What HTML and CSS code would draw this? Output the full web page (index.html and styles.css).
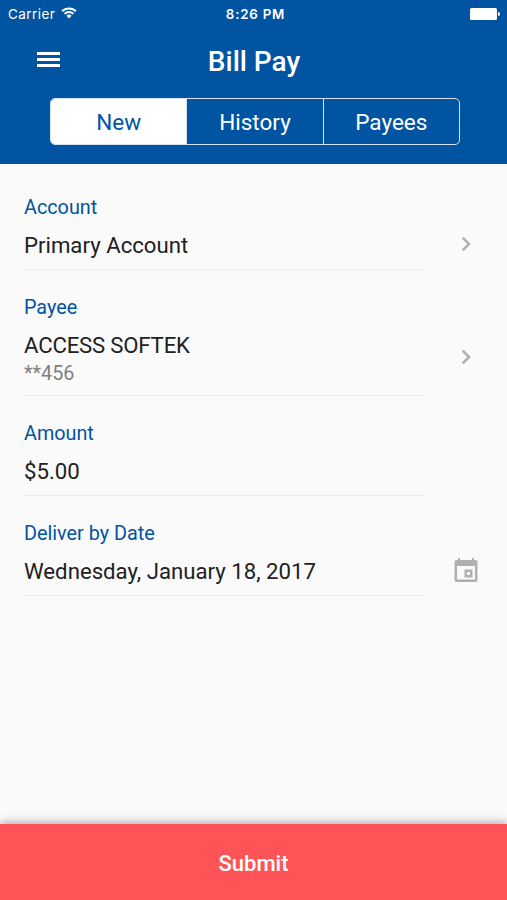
FILE: index.html
```html
<!DOCTYPE html>
<html lang="en">
<head>
  <meta charset="utf-8">
  <meta name="viewport" content="width=device-width, initial-scale=1.0">
  <title>Bill Pay</title>
  <link rel="stylesheet" href="styles.css">
</head>
<body>
  <header class="header">
    <div class="status-bar">
      <div class="carrier">
        <span>Carrier</span>
        <svg class="wifi" viewBox="0 0 16 12">
          <path d="M1 4.300a10 10 0 0 1 14 0M3.500 6.900a6.400 6.400 0 0 1 9 0" />
          <path class="dot" d="M8 11.400 5.400 8.800a3.700 3.700 0 0 1 5.200 0z" />
        </svg>
      </div>
      <div class="time">8:26 PM</div>
      <svg class="battery" viewBox="0 0 30 12">
        <rect width="27" height="12" rx="1.5" />
        <path d="M28 4a2 2 0 0 1 0 4z" />
      </svg>
    </div>

    <div class="title-bar">
      <button class="menu-btn" aria-label="Menu">
        <span></span>
        <span></span>
        <span></span>
      </button>
      <h1>Bill Pay</h1>
    </div>

    <nav class="tabs">
      <button class="tab active">New</button>
      <button class="tab">History</button>
      <button class="tab">Payees</button>
    </nav>
  </header>

  <main class="form">
    <div class="row">
      <div class="field">
        <div class="label">Account</div>
        <div class="value">Primary Account</div>
      </div>
      <svg class="chevron" viewBox="0 0 10 16">
        <path d="M1.700 1.700 8 8l-6.300 6.300" />
      </svg>
    </div>

    <div class="row">
      <div class="field">
        <div class="label">Payee</div>
        <div class="value payee">ACCESS SOFTEK</div>
        <div class="note">**456</div>
      </div>
      <svg class="chevron tall" viewBox="0 0 10 16">
        <path d="M1.700 1.700 8 8l-6.300 6.300" />
      </svg>
    </div>

    <div class="row">
      <div class="field">
        <div class="label">Amount</div>
        <div class="value">$5.00</div>
      </div>
    </div>

    <div class="row">
      <div class="field">
        <div class="label">Deliver by Date</div>
        <div class="value">Wednesday, January 18, 2017</div>
      </div>
      <svg class="calendar" viewBox="0 0 24 26">
        <path fill-rule="evenodd" d="M4 1h2v2h12V1h2v2h1.500a2 2 0 0 1 2 2v18a2 2 0 0 1-2 2h-19a2 2 0 0 1-2-2V5a2 2 0 0 1 2-2H4zM3 9v13.500h18V9z" />
        <path fill-rule="evenodd" d="M10.500 12.500h8v8h-8zM13 15v3h3v-3z" />
      </svg>
    </div>
  </main>

  <button class="submit-btn">Submit</button>
</body>
</html>
```

FILE: styles.css
```css
:root {
  --primary-color: #0054a2;
  --submit-color: #ff5457;
  --background: #fafafa;
  --text-color: #212121;
  --icon-color: #b0b0b0;
}

* {
  margin: 0;
  padding: 0;
  box-sizing: border-box;
}

body {
  display: flex;
  flex-direction: column;
  height: 100vh;
  background: var(--background);
  color: var(--text-color);
  font-family: Roboto, sans-serif;
}

button {
  border: none;
  background: none;
  color: inherit;
  font-family: inherit;
  cursor: pointer;
}

.header {
  height: 164px;
  background: var(--primary-color);
  color: white;
}

.status-bar {
  display: grid;
  grid-template-columns: 1fr auto 1fr;
  align-items: center;
  height: 27px;
  padding: 0 4px 0 8px;
  font-family: Inter, sans-serif;
  font-size: 13.5px;
}

.carrier {
  display: flex;
  align-items: center;
  gap: 6px;
  letter-spacing: 0.45px;
}

.wifi {
  width: 16px;
  height: 12px;
  margin-top: -2px;
  fill: none;
  stroke: white;
  stroke-width: 1.9;
}

.wifi .dot {
  fill: white;
  stroke: none;
}

.time {
  font-weight: 600;
  font-size: 13.3px;
  letter-spacing: 0.8px;
}

.battery {
  justify-self: end;
  width: 30px;
  height: 12px;
  margin-right: 3px;
  fill: white;
}

.title-bar {
  display: grid;
  grid-template-columns: 1fr auto 1fr;
  align-items: center;
  height: 71px;
  padding: 0 36px 0 37px;
}

.menu-btn {
  display: flex;
  flex-direction: column;
  gap: 3px;
  width: 23px;
  margin-bottom: 6px;
}

.menu-btn span {
  width: 100%;
  height: 3px;
  background: white;
}

h1 {
  font-size: 28px;
  font-weight: 500;
  line-height: 32px;
  margin-bottom: 1px;
}

.tabs {
  display: flex;
  width: 410px;
  height: 47px;
  margin-left: 50px;
  border: 1px solid #d5e5f4;
  border-radius: 5px;
  overflow: hidden;
}

.tab {
  flex: 1;
  padding-top: 1px;
  font-size: 22.5px;
}

.tab + .tab {
  border-left: 1px solid #d5e5f4;
}

.tab.active {
  background: white;
  color: var(--primary-color);
}

.form {
  flex: 1;
  padding: 5.7px 29.5px 0 24px;
}

.row {
  display: flex;
  align-items: flex-end;
  justify-content: space-between;
}

.field {
  width: 402px;
  padding: 26px 0 8.2px;
  border-bottom: 1px solid #ededed;
}

.label {
  margin-bottom: 9px;
  color: var(--primary-color);
  font-size: 19.8px;
  line-height: 24px;
}

.value {
  font-size: 22.2px;
  line-height: 32px;
}

.payee {
  letter-spacing: -0.2px;
}

.note {
  color: #808080;
  font-size: 19.8px;
  line-height: 25.6px;
}

.chevron {
  width: 10px;
  height: 16px;
  margin: 0 7px 18px 0;
  fill: none;
  stroke: var(--icon-color);
  stroke-width: 2.5;
}

.chevron.tall {
  margin-bottom: 31px;
}

.calendar {
  width: 24px;
  height: 26px;
  margin-bottom: 13px;
  fill: var(--icon-color);
}

.submit-btn {
  height: 76px;
  padding-top: 2px;
  background: var(--submit-color);
  color: white;
  font-size: 22px;
  font-weight: 500;
  box-shadow: 0 -2px 8px rgba(0, 0, 0, 0.3);
}
```
